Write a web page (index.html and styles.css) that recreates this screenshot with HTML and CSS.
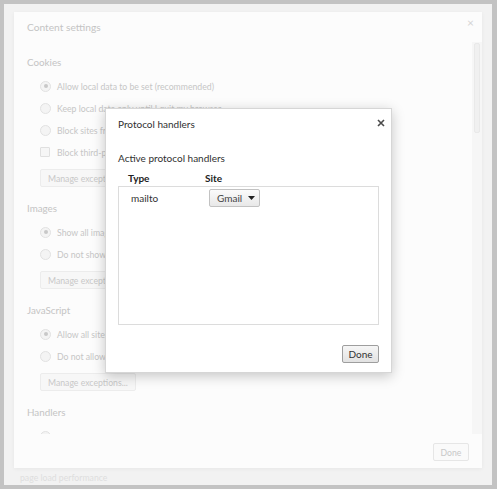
FILE: index.html
```html
<!DOCTYPE html>
<html>
<head>
<meta charset="utf-8">
<link rel="stylesheet" href="styles.css">
</head>
<body>
<div class="frame">
  <div class="panel">
    <div class="panel-head">
      <span class="panel-title">Content settings</span>
      <span class="panel-close">×</span>
    </div>
    <div class="panel-scroll">
      <div class="panel-body">
        <section class="sec">
          <h3 class="sec-title">Cookies</h3>
          <ul class="opts">
            <li class="opt"><span class="radio checked"></span>Allow local data to be set (recommended)</li>
            <li class="opt"><span class="radio"></span>Keep local data only until I quit my browser</li>
            <li class="opt"><span class="radio"></span>Block sites from setting any data</li>
            <li class="opt"><span class="check"></span>Block third-party cookies and site data</li>
          </ul>
          <button class="faint-btn">Manage exceptions...</button>
        </section>
        <section class="sec">
          <h3 class="sec-title">Images</h3>
          <ul class="opts">
            <li class="opt"><span class="radio checked"></span>Show all images (recommended)</li>
            <li class="opt"><span class="radio"></span>Do not show any images</li>
          </ul>
          <button class="faint-btn">Manage exceptions...</button>
        </section>
        <section class="sec">
          <h3 class="sec-title">JavaScript</h3>
          <ul class="opts">
            <li class="opt"><span class="radio checked"></span>Allow all sites to run JavaScript (recommended)</li>
            <li class="opt"><span class="radio"></span>Do not allow any site to run JavaScript</li>
          </ul>
          <button class="faint-btn">Manage exceptions...</button>
        </section>
        <section class="sec">
          <h3 class="sec-title">Handlers</h3>
          <ul class="opts">
            <li class="opt"><span class="radio"></span></li>
          </ul>
        </section>
      </div>
      <div class="scrollbar"><div class="thumb"></div></div>
    </div>
    <div class="panel-foot">
      <button class="faint-btn done-faint">Done</button>
    </div>
  </div>
  <div class="behind-text">page load performance</div>

  <div class="dialog">
    <div class="dlg-head">
      <span class="dlg-title">Protocol handlers</span>
      <svg class="dlg-close" width="8" height="8" viewBox="0 0 8 8"><path d="M1 1L7 7M7 1L1 7" stroke="#4a4a4a" stroke-width="1.6"/></svg>
    </div>
    <div class="dlg-sub">Active protocol handlers</div>
    <div class="cols">
      <span class="col-type">Type</span>
      <span class="col-site">Site</span>
    </div>
    <div class="table">
      <div class="row">
        <span class="cell-type">mailto</span>
        <span class="select">Gmail<svg class="arrow" width="7" height="4" viewBox="0 0 7 4"><path d="M0 0H7L3.5 4Z" fill="#222"/></svg></span>
      </div>
    </div>
    <div class="dlg-foot">
      <button class="btn">Done</button>
    </div>
  </div>
</div>
</body>
</html>
```
FILE: styles.css
```css
* { box-sizing: border-box; }
html, body { margin: 0; padding: 0; }
body {
  width: 497px;
  height: 489px;
  background: #c3c3c3;
  padding: 4px 5px 4px 4px;
  font-family: "Lato", "Open Sans", sans-serif;
  font-size: 10px;
  overflow: hidden;
}
.frame {
  position: relative;
  height: 481px;
  background: #f2f2f2;
  padding: 8px 10px 0 10px;
  display: flex;
  flex-direction: column;
}
.panel {
  height: 458px;
  background: #fcfcfc;
  box-shadow: 0 1px 4px rgba(0,0,0,0.05);
  display: flex;
  flex-direction: column;
}
.panel-head {
  height: 30px;
  padding: 8px 8px 0 13px;
  display: flex;
  justify-content: space-between;
  align-items: flex-start;
}
.panel-title {
  font-size: 10.2px;
  line-height: 14px;
  color: #c4c4c4;
}
.panel-close {
  color: #d4d4d4;
  font-size: 12px;
  line-height: 10px;
  margin-top: -2px;
}
.panel-scroll {
  height: 392px;
  display: flex;
  overflow: hidden;
}
.panel-body {
  flex: 1;
  padding: 10px 0 0 13px;
  overflow: hidden;
}
.sec { margin: 0 0 11px 0; }
.sec-title {
  margin: 0;
  font-weight: normal;
  font-size: 9.8px;
  line-height: 20px;
  color: #c4c4c4;
}
.opts {
  list-style: none;
  margin: 3px 0 0 0;
  padding: 0 0 0 13px;
}
.opt {
  height: 22px;
  display: flex;
  align-items: center;
  color: #c6c6c6;
  font-size: 8.7px;
  white-space: nowrap;
}
.radio {
  width: 11px;
  height: 11px;
  border-radius: 50%;
  border: 1px solid #e2e2e2;
  background: #f4f4f4;
  margin-right: 6px;
  position: relative;
  flex: none;
}
.radio.checked::after {
  content: "";
  position: absolute;
  left: 2.5px;
  top: 2.5px;
  width: 4px;
  height: 4px;
  border-radius: 50%;
  background: #c8c8c8;
}
.check {
  width: 10px;
  height: 10px;
  border: 1px solid #e0e0e0;
  border-radius: 1px;
  background: #f6f6f6;
  margin-right: 7px;
  flex: none;
}
.faint-btn {
  margin: 6px 0 0 13px;
  height: 18px;
  padding: 0 7px;
  font-family: inherit;
  font-size: 8.7px;
  color: #c8c8c8;
  background: #f7f7f7;
  border: 1px solid #ececec;
  border-radius: 2px;
  display: block;
  width: 96px;
  text-align: left;
  white-space: nowrap;
  overflow: hidden;
}
.scrollbar {
  width: 10px;
  background: #f6f6f6;
  padding: 1px 2px 0 2px;
}
.thumb {
  height: 90px;
  background: #f0f0f0;
  border: 1px solid #e9e9e9;
  border-radius: 2px;
}
.panel-foot {
  flex: 1;
  display: flex;
  justify-content: flex-end;
  padding: 9px 13px 0 0;
}
.done-faint {
  margin: 0;
  width: 36px;
  text-align: center;
  padding: 0;
  border-color: #e6e6e6;
  background: #fafafa;
}
.behind-text {
  padding: 3px 0 0 6px;
  color: #dedede;
  font-size: 8.7px;
  line-height: 14px;
}
.dialog {
  position: absolute;
  left: 101px;
  top: 104px;
  width: 287px;
  height: 265px;
  background: #fff;
  border: 1px solid #d6d6d6;
  box-shadow: 0 3px 12px rgba(0,0,0,0.22);
  padding: 0 12px 0 12px;
  color: #333;
}
.dlg-head {
  height: 31px;
  padding-top: 8px;
  display: flex;
  justify-content: space-between;
  align-items: flex-start;
}
.dlg-title {
  font-size: 10px;
  line-height: 14px;
  color: #303030;
}
.dlg-close {
  margin-top: 2px;
  margin-right: -6px;
}
.dlg-sub {
  margin-top: 11px;
  line-height: 14px;
  color: #303030;
}
.cols {
  margin-top: 6px;
  line-height: 14px;
  font-weight: bold;
  display: flex;
  color: #222;
}
.col-type { width: 87px; padding-left: 10px; }
.table {
  margin-top: 1px;
  height: 139px;
  border: 1px solid #dcdcdc;
  padding-top: 2px;
}
.row {
  display: flex;
  align-items: center;
  height: 18px;
}
.cell-type {
  width: 90px;
  padding-left: 12px;
  color: #333;
}
.select {
  width: 51px;
  height: 18px;
  border: 1px solid #c2c2c2;
  border-radius: 2px;
  background: linear-gradient(#fbfbfb, #e8e8e8);
  display: flex;
  align-items: center;
  padding-left: 7px;
  color: #444;
  font-size: 10px;
}
.arrow { margin-left: auto; margin-right: 4px; }
.dlg-foot {
  display: flex;
  justify-content: flex-end;
  margin-top: 20px;
}
.btn {
  width: 37px;
  height: 18px;
  padding: 0;
  font-family: inherit;
  font-size: 10px;
  color: #333;
  border: 1px solid #9e9e9e;
  border-radius: 2px;
  background: linear-gradient(#f6f6f6, #e2e2e2);
}
```
